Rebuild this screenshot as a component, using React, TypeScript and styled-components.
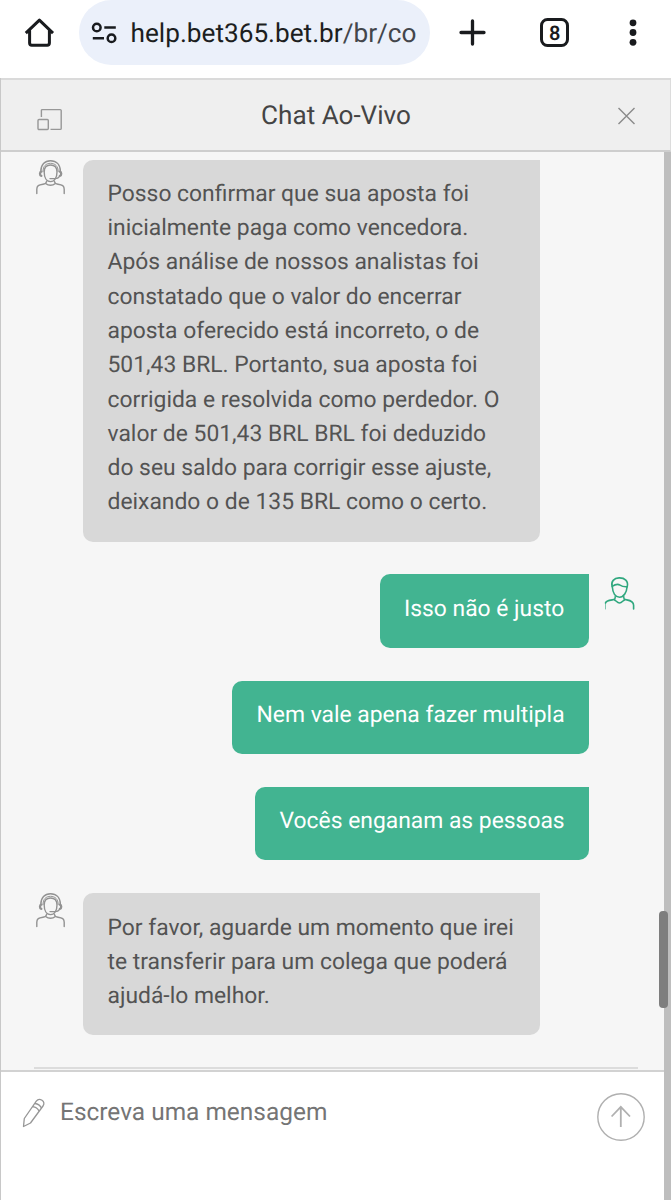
import React from "react";
import styled, { createGlobalStyle } from "styled-components";

const GlobalStyle = createGlobalStyle`
  * { box-sizing: border-box; }
  body {
    margin: 0;
    background: #fff;
    font-family: Roboto, "Liberation Sans", sans-serif;
    text-rendering: geometricPrecision;
  }
`;

const Page = styled.div`
  width: 671px;
  height: 1200px;
  display: flex;
  flex-direction: column;
  overflow: hidden;
`;

const BrowserBar = styled.header`
  height: 78px;
  flex: none;
  display: flex;
  align-items: flex-start;
  padding-left: 23px;
  background: #fff;
`;

const BarIcon = styled.svg<{ $left?: number }>`
  display: block;
  flex: none;
  width: 32px;
  height: 32px;
  margin-top: 17px;
  margin-left: ${(p) => p.$left ?? 0}px;
`;

const AddressPill = styled.div`
  width: 351px;
  height: 65px;
  margin-left: 24px;
  border-radius: 33px;
  background: #ebf0fa;
  display: flex;
  align-items: center;
  padding-left: 11px;
`;

const Url = styled.span`
  margin-left: 12.5px;
  padding-top: 3px;
  font-size: 26.2px;
  line-height: 30px;
  color: #1c1e21;
  white-space: nowrap;
`;

const UrlPath = styled.span`
  color: #43464b;
`;

const Chat = styled.main`
  flex: 1;
  min-height: 0;
  display: flex;
  flex-direction: column;
  border-left: 1px solid #c8c8c8;
`;

const ChatHeader = styled.div`
  height: 74px;
  flex: none;
  display: flex;
  align-items: center;
  justify-content: space-between;
  padding: 0 34px 0 35px;
  border-top: 2px solid #dadada;
  border-right: 1px solid #dcdcdc;
  border-bottom: 2px solid #cecece;
  background: #efefef;
`;

const HeaderIcon = styled.svg<{ $w: number; $h: number; $drop: number }>`
  display: block;
  width: ${(p) => p.$w}px;
  height: ${(p) => p.$h}px;
  margin-top: ${(p) => p.$drop}px;
`;

const Title = styled.h1`
  margin: 0 7px 0 0;
  padding-top: 1px;
  font-size: 26.1px;
  font-weight: 400;
  line-height: 32px;
  color: #444;
  white-space: nowrap;
`;

const Body = styled.div`
  flex: 1;
  min-height: 0;
  display: flex;
`;

const Column = styled.div`
  flex: 1;
  min-width: 0;
  display: flex;
  flex-direction: column;
`;

const Track = styled.div`
  position: relative;
  width: 7px;
  flex: none;
  background: #bebebe;
`;

const Thumb = styled.div`
  position: absolute;
  top: 759px;
  left: -5px;
  width: 9px;
  height: 97px;
  border-radius: 4px;
  background: #7e7e7e;
`;

const Messages = styled.section`
  height: 918px;
  flex: none;
  padding-top: 8px;
  background: #f6f6f6;
  display: flex;
  flex-direction: column;
`;

const Row = styled.div<{ $mine?: boolean; $gap?: number }>`
  display: flex;
  flex: none;
  align-items: flex-start;
  justify-content: ${(p) => (p.$mine ? "flex-end" : "flex-start")};
  padding-left: ${(p) => (p.$mine ? 0 : 34)}px;
  padding-right: ${(p) => (p.$mine ? 28 : 0)}px;
  margin-bottom: ${(p) => p.$gap ?? 0}px;
`;

const Bubble = styled.div<{ $mine?: boolean; $w: number; $h: number; $top?: number }>`
  width: ${(p) => p.$w}px;
  height: ${(p) => p.$h}px;
  padding: ${(p) => p.$top ?? 17}px 0 0 24.5px;
  border-radius: 10px 0 10px 10px;
  background: ${(p) => (p.$mine ? "#42b491" : "#d8d8d8")};
  color: ${(p) => (p.$mine ? "#fff" : "#535353")};
`;

const Line = styled.div`
  font-size: 22.86px;
  line-height: 34.3px;
  white-space: nowrap;
`;

const Avatar = styled.svg<{ $mine?: boolean }>`
  display: block;
  flex: none;
  width: 32px;
  height: 36px;
  margin: ${(p) => (p.$mine ? "2px 0 0 15px" : "0 16px 0 0")};
`;

const AvatarSpace = styled.div`
  width: 47px;
  flex: none;
`;

const EndRule = styled.div`
  height: 2px;
  margin: 0 26px 0 33px;
  background: #dcdcdc;
`;

const Composer = styled.form`
  flex: 1;
  display: flex;
  align-items: flex-start;
  background: #fff;
  border-top: 2px solid #d2d2d2;
  padding: 21px 19px 0 19px;
`;

const PencilIcon = styled.svg`
  display: block;
  flex: none;
  width: 26px;
  height: 32px;
  margin-top: 4px;
`;

const Placeholder = styled.span`
  flex: 1;
  margin-left: 14px;
  margin-top: 2px;
  font-size: 24.45px;
  line-height: 34px;
  color: #757575;
  white-space: nowrap;
`;

const SendIcon = styled.svg`
  display: block;
  flex: none;
  width: 48px;
  height: 48px;
`;

const Agent = () => (
  <Avatar viewBox="0 0 32 36" fill="none" stroke="#929292" strokeWidth="1.400" strokeLinecap="round">
    <path d="M5.800 11.500C5.800 4.500 9.800.8 15.500.8s9.900 3.700 9.900 10.700" />
    <path d="M8 11.500C8 6 11 3.300 15.500 3.300S23.200 6 23.200 11.500" strokeWidth="1" />
    <path d="M9.200 12c0-4.800 2.700-7 6.300-7s6.500 2.200 6.500 7c0 5.200-2.300 9.600-6.500 9.600S9.200 17.200 9.200 12Z" />
    <path d="M6.300 11.600c-1.700.3-1.700 4 0 4.300M24.900 11.600c1.700.3 1.700 4 0 4.300" strokeWidth="2.400" />
    <path d="M24.400 16.600c-1 1.700-2.300 2-4.400 2h-5" />
    <path d="M11.500 21.500c-.2 1.700-1.300 2.400-3.500 2.700-4.400.7-6.200 1.600-6.200 5V33.500M19.500 21.500c.2 1.700 1.300 2.400 3.500 2.700 4.400.7 6.200 1.600 6.200 5V33.500M11 23.700c2.300 2 6.700 2 9 0" />
  </Avatar>
);

const User = () => (
  <Avatar $mine viewBox="0 0 32 36" fill="none" stroke="#2fa77e" strokeWidth="1.600" strokeLinecap="round" strokeLinejoin="round">
    <path d="M8.200 10.500C6.500 5.500 10.300 2 15 1.900c5.700-.2 9.700 3.200 8.200 8.800" />
    <path d="M8.200 10.300c.5 5.900 2.900 10.900 7.300 10.900s7.100-4.900 7.600-10.500c-2.900.2-5-.2-7.100-1.600-1.900-1.300-4.800-.8-7.800 1.200Z" />
    <path d="M11.200 20.800c.2 2.200-.5 2.700-3 3.100C4 24.500 1.800 25.200 1.500 27" />
    <path d="M1.500 27v6" strokeWidth=".6" />
    <path d="M19.800 20.800c-.2 2.200.5 2.700 3 3.100 4.600.8 6.800 2 6.800 5.400V33M10.300 23.700c1.500.8 3.200 3.300 5.200 3.300s3.700-2.500 5.200-3.300" />
  </Avatar>
);

type Message = { mine?: boolean; icon?: boolean; w: number; h: number; top?: number; gap: number; lines: string[] };

const messages: Message[] = [
  {
    icon: true, w: 457, h: 382, top: 16.8, gap: 32,
    lines: [
      "Posso confirmar que sua aposta foi",
      "inicialmente paga como vencedora.",
      "Após análise de nossos analistas foi",
      "constatado que o valor do encerrar",
      "aposta oferecido está incorreto, o de",
      "501,43 BRL. Portanto, sua aposta foi",
      "corrigida e resolvida como perdedor. O",
      "valor de 501,43 BRL BRL foi deduzido",
      "do seu saldo para corrigir esse ajuste,",
      "deixando o de 135 BRL como o certo.",
    ],
  },
  { mine: true, icon: true, w: 209.5, h: 74, top: 18, gap: 33, lines: ["Isso não é justo"] },
  { mine: true, w: 357, h: 73, gap: 33, lines: ["Nem vale apena fazer multipla"] },
  { mine: true, w: 334, h: 73, gap: 33, lines: ["Vocês enganam as pessoas"] },
  {
    icon: true, w: 457, h: 142, top: 17.5, gap: 32,
    lines: [
      "Por favor, aguarde um momento que irei",
      "te transferir para um colega que poderá",
      "ajudá-lo melhor.",
    ],
  },
];

export default function App() {
  return (
    <Page>
      <GlobalStyle />
      <BrowserBar>
        <BarIcon viewBox="0 0 32 32" fill="none" stroke="#191b1e" strokeWidth="3" strokeLinejoin="round">
          <path d="M2.800 16.200 16.400 3.200l13.600 13M6.600 13.500V26q0 2.200 2.200 2.200h15.400q2.200 0 2.200-2.200V13.500" />
        </BarIcon>
        <AddressPill>
          <svg width="28" height="24" viewBox="0 0 28 24" fill="none" stroke="#191b1e" strokeWidth="2.500">
            <circle cx="6.800" cy="6.500" r="3.800" />
            <path d="M14.300 6.500h11.500M2.800 17.200h11.200" />
            <circle cx="21.500" cy="17.200" r="3.800" />
          </svg>
          <Url>
            help.bet365.bet.br<UrlPath>/br/co</UrlPath>
          </Url>
        </AddressPill>
        <BarIcon $left={26} viewBox="0 0 32 32" fill="none" stroke="#191b1e" strokeWidth="3.300" strokeLinecap="round">
          <path d="M16.500 4v23M5 15.500h23" />
        </BarIcon>
        <BarIcon $left={51} viewBox="0 0 32 32">
          <rect x="2.500" y="2.500" width="26" height="26" rx="6" fill="none" stroke="#191b1e" strokeWidth="3" />
          <text x="15.700" y="22.700" textAnchor="middle" fontSize="20" fontWeight="600" fontFamily="Roboto, sans-serif" fill="#191b1e">8</text>
        </BarIcon>
        <BarIcon $left={46} viewBox="0 0 32 32" fill="#191b1e">
          <circle cx="16" cy="5.800" r="3.400" />
          <circle cx="16" cy="15.500" r="3.400" />
          <circle cx="16" cy="25.300" r="3.400" />
        </BarIcon>
      </BrowserBar>
      <Chat>
        <ChatHeader>
          <HeaderIcon $w={27} $h={24} $drop={10} viewBox="0 0 27 24" fill="none" stroke="#979797" strokeWidth="1.400" strokeLinejoin="round">
            <path d="M5.400 9V2.600q0-1 1-1h17.800q1 0 1 1v17.800q0 1-1 1H14.500" />
            <rect x="2" y="11.500" width="10.300" height="10" rx="1" />
          </HeaderIcon>
          <Title>Chat Ao-Vivo</Title>
          <HeaderIcon $w={20} $h={20} $drop={2} viewBox="0 0 20 20" fill="none" stroke="#8a8a8a" strokeWidth="1.400">
            <path d="m2.500 2 16 16M18.500 2l-16 16" />
          </HeaderIcon>
        </ChatHeader>
        <Body>
          <Column>
            <Messages>
              {messages.map((m) => (
                <Row key={m.lines[0]} $mine={m.mine} $gap={m.gap}>
                  {!m.mine && <Agent />}
                  <Bubble $mine={m.mine} $w={m.w} $h={m.h} $top={m.top}>
                    {m.lines.map((line) => (
                      <Line key={line}>{line}</Line>
                    ))}
                  </Bubble>
                  {m.mine && (m.icon ? <User /> : <AvatarSpace />)}
                </Row>
              ))}
              <EndRule />
            </Messages>
            <Composer>
              <PencilIcon viewBox="0 0 26 32" fill="none" stroke="#969696" strokeWidth="1.300" strokeLinejoin="round">
                <path d="M3.500 29.500 4.300 21.500 16.300 4.200c1.500-2.100 3.600-2.300 5.700-.9s2.500 3.600 1 5.700L10.500 26ZM15 6.500q4.500.5 6.400 4.500M12.700 9.700q4.500.5 6.400 4.500" />
              </PencilIcon>
              <Placeholder>Escreva uma mensagem</Placeholder>
              <SendIcon viewBox="0 0 48 48" fill="none" stroke="#b0b0b0" strokeWidth="1.400">
                <circle cx="24" cy="24" r="23.200" />
                <path d="M23.800 34V14M14.600 23.500l9.200-9.600 9.200 9.600" strokeWidth="1.800" />
              </SendIcon>
            </Composer>
          </Column>
          <Track>
            <Thumb />
          </Track>
        </Body>
      </Chat>
    </Page>
  );
}
